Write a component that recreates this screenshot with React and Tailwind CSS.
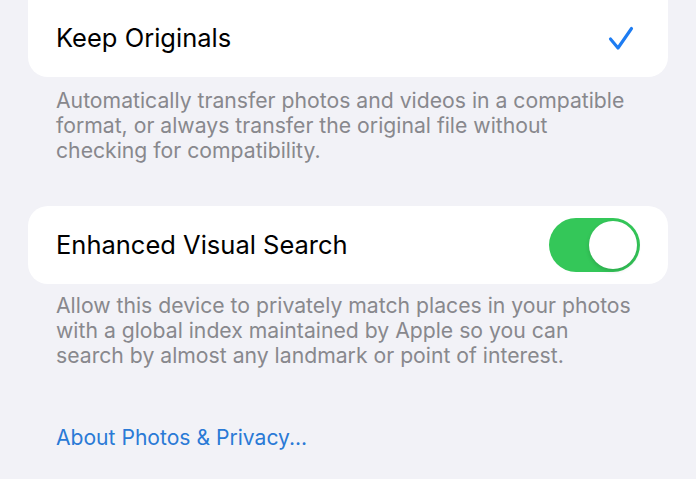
export default function App() {
  return (
    <div className="w-[696px] h-[479px] bg-[#f2f2f7] overflow-hidden font-['Inter',sans-serif] antialiased">
      <div className="mx-[28px] h-[77px] bg-white rounded-b-[20px] flex items-center justify-between pl-[28px] pr-[34px]">
        <span className="text-[25.5px] text-black">Keep Originals</span>
        <svg width="26" height="25" viewBox="0 0 26 25" fill="none">
          <path d="M2.5 13 L10 22 L23.5 2.5" stroke="#1d7cf2" strokeWidth="3.1" strokeLinecap="round" strokeLinejoin="round" />
        </svg>
      </div>
      <p className="px-[56px] pt-[11px] text-[21.2px] leading-[25px] text-[#88888d]">
        Automatically transfer photos and videos in a compatible<br />
        format, or always transfer the original file without<br />
        checking for compatibility.
      </p>
      <div className="mt-[43px] mx-[28px] h-[78px] bg-white rounded-[20px] flex items-center justify-between pl-[28px] pr-[28px]">
        <span className="text-[25.5px] text-black">Enhanced Visual Search</span>
        <div className="w-[91px] h-[54px] rounded-full bg-[#34c759] flex items-center justify-end p-[3px]">
          <div className="w-[48px] h-[48px] rounded-full bg-white shadow-[0_2px_4px_rgba(0,0,0,0.15)]" />
        </div>
      </div>
      <p className="px-[56px] pt-[9px] text-[21.2px] leading-[25px] text-[#88888d]">
        Allow this device to privately match places in your photos<br />
        with a global index maintained by Apple so you can<br />
        search by almost any landmark or point of interest.
      </p>
      <p className="mt-[57px] px-[56px] text-[21.1px] leading-[25px] text-[#2a7ad6]">
        About Photos &amp; Privacy...
      </p>
    </div>
  );
}
